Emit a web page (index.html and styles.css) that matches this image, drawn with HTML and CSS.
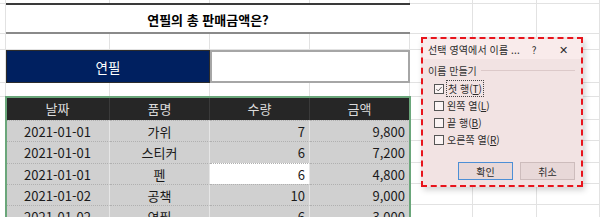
FILE: index.html
```html
<!DOCTYPE html>
<html lang="ko">
<head>
<meta charset="utf-8">
<link rel="stylesheet" href="styles.css">
</head>
<body>
<div class="sheet">
  <div class="grid">
    <div class="c"></div><div class="c"></div><div class="c"></div><div class="c"></div><div class="c"></div><div class="c"></div><div class="c"></div><div class="c"></div>

    <div class="c"></div>
    <div class="title">연필의 총 판매금액은?</div>
    <div class="c"></div><div class="c"></div><div class="c"></div>

    <div class="c"></div><div class="c"></div><div class="c"></div><div class="c"></div><div class="c"></div><div class="c"></div><div class="c"></div><div class="c"></div>

    <div class="c"></div>
    <div class="label">연필</div>
    <div class="value"></div>
    <div class="c"></div><div class="c"></div><div class="c"></div>

    <div class="c"></div><div class="c"></div><div class="c"></div><div class="c"></div><div class="c"></div><div class="c"></div><div class="c"></div><div class="c"></div>

    <div class="c rowspan"></div>
    <div class="tbl">
      <div class="th">날짜</div><div class="th">품명</div><div class="th">수량</div><div class="th">금액</div>
      <div class="td">2021-01-01</div><div class="td">가위</div><div class="td num">7</div><div class="td num">9,800</div>
      <div class="td">2021-01-01</div><div class="td">스티커</div><div class="td num">6</div><div class="td num">7,200</div>
      <div class="td">2021-01-01</div><div class="td">펜</div><div class="td num active">6</div><div class="td num">4,800</div>
      <div class="td">2021-01-02</div><div class="td">공책</div><div class="td num">10</div><div class="td num">9,000</div>
      <div class="td">2021-01-02</div><div class="td">연필</div><div class="td num">6</div><div class="td num">3,000</div>
    </div>
    <div class="c"></div><div class="c"></div><div class="c"></div>
    <div class="c"></div><div class="c"></div><div class="c"></div>
    <div class="c"></div><div class="c"></div><div class="c"></div>
    <div class="c"></div><div class="c"></div><div class="c"></div>
    <div class="c"></div><div class="c"></div><div class="c"></div>
    <div class="c"></div><div class="c"></div><div class="c"></div>
  </div>

  <div class="dialog">
    <div class="dlg-title">
      <span class="dlg-name">선택 영역에서 이름 ...</span>
      <span class="dlg-help">?</span>
      <span class="dlg-close">✕</span>
    </div>
    <div class="group">
      <div class="group-label"><span>이름 만들기</span><span class="rule"></span></div>
      <div class="opt"><span class="box checked"><svg viewBox="0 0 10 10" width="10" height="10"><path d="M1.8 5.2 L4 7.4 L8.4 2.4" fill="none" stroke="#333" stroke-width="1"/></svg></span><span class="focus">첫 행(<u>T</u>)</span></div>
      <div class="opt"><span class="box"></span><span>왼쪽 열(<u>L</u>)</span></div>
      <div class="opt"><span class="box"></span><span>끝 행(<u>B</u>)</span></div>
      <div class="opt"><span class="box"></span><span>오른쪽 열(<u>R</u>)</span></div>
    </div>
    <div class="buttons">
      <div class="btn primary">확인</div>
      <div class="btn">취소</div>
    </div>
  </div>
</div>
</body>
</html>
```

FILE: styles.css
```css
* { box-sizing: border-box; }
html, body { margin: 0; padding: 0; }
body {
  width: 600px;
  height: 217px;
  overflow: hidden;
  background: #fff;
  font-family: "Noto Sans CJK KR", "Noto Sans", sans-serif;
  color: #000;
}
.sheet { position: relative; width: 600px; height: 217px; }
.grid {
  display: grid;
  grid-template-columns: 6px 104px 100px 100px 100px 63px 64px 63px;
  grid-template-rows: 4px 30px 16px 33px 14px 23px 21px 22px 21px 21px 21px;
}
.c {
  border-right: 1px solid #e2e2e2;
  border-bottom: 1px solid #e2e2e2;
}
.title {
  grid-column: 2 / 6;
  border-top: 2px solid #3a3a3a;
  border-bottom: 2px solid #8a8a8a;
  margin-top: -1px;
  display: flex;
  align-items: center;
  justify-content: center;
  font-weight: bold;
  font-size: 13px;
  padding-top: 1px;
}
.label {
  grid-column: 2 / 4;
  background: #002060;
  color: #fff;
  display: flex;
  align-items: center;
  justify-content: center;
  font-size: 13.5px;
  border: 1px solid #2b2b2b;
}
.value {
  grid-column: 4 / 6;
  border: 2px solid #a6a6a6;
  background: #fff;
}
.rowspan { grid-row: 6 / 12; }
.tbl {
  grid-column: 2 / 6;
  grid-row: 6 / 12;
  display: grid;
  grid-template-columns: 104px 100px 100px 100px;
  grid-template-rows: 23px 21px 22px 21px 21px 21px;
  outline: 2px solid #6aa67a;
  outline-offset: -1px;
  font-size: 13px;
  position: relative;
}
.th {
  background: #262626;
  color: #dcdcdc;
  display: flex;
  align-items: center;
  justify-content: center;
  border-right: 1px solid #3a3a3a;
}
.td {
  background: #d0d0d0;
  border-right: 1px solid #e6e6e6;
  border-top: 1px dotted #b0b0b0;
  display: flex;
  align-items: center;
  justify-content: center;
  color: #1a1a1a;
}
.td.num { justify-content: flex-end; padding-right: 4px; }
.td.active { background: #fff; }

.dialog {
  position: absolute;
  left: 421px;
  top: 37px;
  width: 162px;
  height: 150px;
  border: 2.5px dashed #e8141c;
  background: #f2e3e3;
  box-shadow: 2px 3px 6px rgba(0,0,0,0.18);
  font-size: 10px;
  color: #2a2a2a;
}
.dlg-title {
  height: 20px;
  background: #f9ebeb;
  display: flex;
  align-items: center;
  padding-left: 5px;
}
.dlg-name { flex: 1; letter-spacing: 0.1px; }
.dlg-help { width: 22px; text-align: center; }
.dlg-close { width: 36px; text-align: center; font-size: 11px; }
.group { padding: 4px 6px 0 5px; }
.group-label { display: flex; align-items: center; gap: 4px; height: 14px; color: #333; }
.group-label .rule { flex: 1; border-top: 1px solid #dcc9c9; }
.opt {
  display: flex;
  align-items: center;
  gap: 3px;
  height: 17px;
  padding-left: 6px;
}
.group-label + .opt { margin-top: 3px; }
.box {
  width: 10px;
  height: 10px;
  border: 1px solid #555;
  background: #fbf4f4;
  display: flex;
  align-items: center;
  justify-content: center;
}
.focus { outline: 1px dotted #444; outline-offset: 0; padding: 0 1px; }
u { text-decoration: underline; }
.buttons {
  display: flex;
  justify-content: flex-end;
  gap: 7px;
  padding: 14px 6px 0 0;
}
.btn {
  width: 55px;
  height: 18px;
  border: 1px solid #cdbcbc;
  background: #e8d8d8;
  display: flex;
  align-items: center;
  justify-content: center;
}
.btn.primary { border: 1px solid #4d8fd6; }
```
